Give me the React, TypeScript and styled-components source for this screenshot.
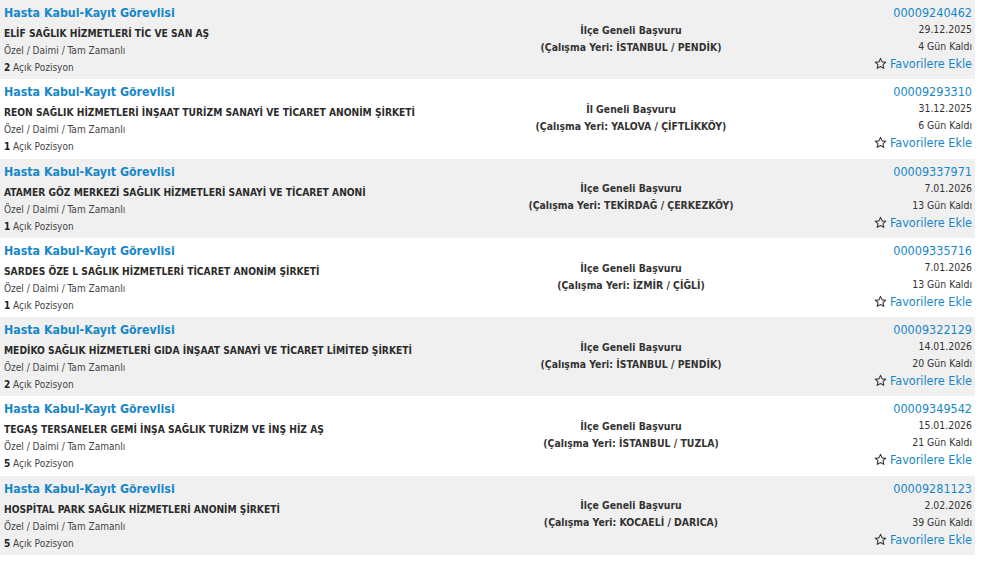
import React from "react";
import styled, { createGlobalStyle } from "styled-components";

const Global = createGlobalStyle`
  html, body { margin: 0; padding: 0; background: #ffffff; }
  body { font-family: "DejaVu Sans Condensed", "DejaVu Sans", sans-serif; color: #333; }
`;

type Job = {
  company: string;
  count: number;
  scope: string;
  place: string;
  id: string;
  date: string;
  days: number;
};

const jobs: Job[] = [
  { company: "ELİF SAĞLIK HİZMETLERİ TİC VE SAN AŞ", count: 2, scope: "İlçe Geneli Başvuru", place: "İSTANBUL / PENDİK", id: "00009240462", date: "29.12.2025", days: 4 },
  { company: "REON SAĞLIK HİZMETLERİ İNŞAAT TURİZM SANAYİ VE TİCARET ANONİM ŞİRKETİ", count: 1, scope: "İl Geneli Başvuru", place: "YALOVA / ÇİFTLİKKÖY", id: "00009293310", date: "31.12.2025", days: 6 },
  { company: "ATAMER GÖZ MERKEZİ SAĞLIK HİZMETLERİ SANAYİ VE TİCARET ANONİ", count: 1, scope: "İlçe Geneli Başvuru", place: "TEKİRDAĞ / ÇERKEZKÖY", id: "00009337971", date: "7.01.2026", days: 13 },
  { company: "SARDES ÖZE L SAĞLIK HİZMETLERİ TİCARET ANONİM ŞİRKETİ", count: 1, scope: "İlçe Geneli Başvuru", place: "İZMİR / ÇİĞLİ", id: "00009335716", date: "7.01.2026", days: 13 },
  { company: "MEDİKO SAĞLIK HİZMETLERİ GIDA İNŞAAT SANAYİ VE TİCARET LİMİTED ŞİRKETİ", count: 2, scope: "İlçe Geneli Başvuru", place: "İSTANBUL / PENDİK", id: "00009322129", date: "14.01.2026", days: 20 },
  { company: "TEGAŞ TERSANELER GEMİ İNŞA SAĞLIK TURİZM VE İNŞ HİZ AŞ", count: 5, scope: "İlçe Geneli Başvuru", place: "İSTANBUL / TUZLA", id: "00009349542", date: "15.01.2026", days: 21 },
  { company: "HOSPİTAL PARK SAĞLIK HİZMETLERİ ANONİM ŞİRKETİ", count: 5, scope: "İlçe Geneli Başvuru", place: "KOCAELİ / DARICA", id: "00009281123", date: "2.02.2026", days: 39 },
];

const List = styled.div`
  width: 975px;
  display: flex;
  flex-direction: column;
`;

const Row = styled.div<{ $alt: boolean }>`
  height: 79.3px;
  box-sizing: border-box;
  display: grid;
  grid-template-columns: 477px 300px 1fr;
  background: ${(p) => (p.$alt ? "#ffffff" : "#f0f0f0")};
  padding: 2px 3px 0 4px;
`;

const Left = styled.div`
  display: flex;
  flex-direction: column;
  min-width: 0;
`;

const Title = styled.a`
  font-size: 12.3px;
  font-weight: bold;
  line-height: 23px;
  color: #1787c9;
  text-decoration: none;
`;

const Company = styled.div`
  font-size: 10.2px;
  font-weight: bold;
  line-height: 17px;
  color: #2b2b2b;
  white-space: nowrap;
`;

const Meta = styled.div`
  font-size: 10px;
  line-height: 17px;
  color: #444;
  white-space: nowrap;
  b { color: #222; }
`;

const Middle = styled.div`
  display: flex;
  flex-direction: column;
  align-items: center;
  justify-content: center;
  padding-bottom: 4px;
`;

const MidLine = styled.div`
  font-size: 10.4px;
  font-weight: bold;
  line-height: 17px;
  color: #333;
  white-space: nowrap;
`;

const Right = styled.div`
  display: flex;
  flex-direction: column;
  align-items: flex-end;
  padding-top: 2px;
`;

const Code = styled.a`
  font-size: 12.5px;
  line-height: 17px;
  color: #1787c9;
  text-decoration: none;
`;

const Small = styled.div`
  font-size: 10.4px;
  line-height: 17px;
  color: #333;
`;

const Fav = styled.a`
  display: flex;
  align-items: center;
  gap: 3px;
  font-size: 12.5px;
  line-height: 17px;
  color: #1787c9;
  text-decoration: none;
`;

const Star = () => (
  <svg width="13" height="13" viewBox="0 0 24 24" fill="none" stroke="#333" strokeWidth="2" strokeLinejoin="round">
    <polygon points="12,2.5 14.9,9 21.8,9.6 16.6,14.2 18.1,21 12,17.4 5.9,21 7.4,14.2 2.2,9.6 9.1,9" />
  </svg>
);

export default function App() {
  return (
    <>
      <Global />
      <List>
        {jobs.map((j, i) => (
          <Row key={j.id} $alt={i % 2 === 1}>
            <Left>
              <Title>Hasta Kabul-Kayıt Görevlisi</Title>
              <Company>{j.company}</Company>
              <Meta>Özel / Daimi / Tam Zamanlı</Meta>
              <Meta>
                <b>{j.count}</b> Açık Pozisyon
              </Meta>
            </Left>
            <Middle>
              <MidLine>{j.scope}</MidLine>
              <MidLine>(Çalışma Yeri: {j.place})</MidLine>
            </Middle>
            <Right>
              <Code>{j.id}</Code>
              <Small>{j.date}</Small>
              <Small>{j.days} Gün Kaldı</Small>
              <Fav>
                <Star />
                Favorilere Ekle
              </Fav>
            </Right>
          </Row>
        ))}
      </List>
    </>
  );
}
